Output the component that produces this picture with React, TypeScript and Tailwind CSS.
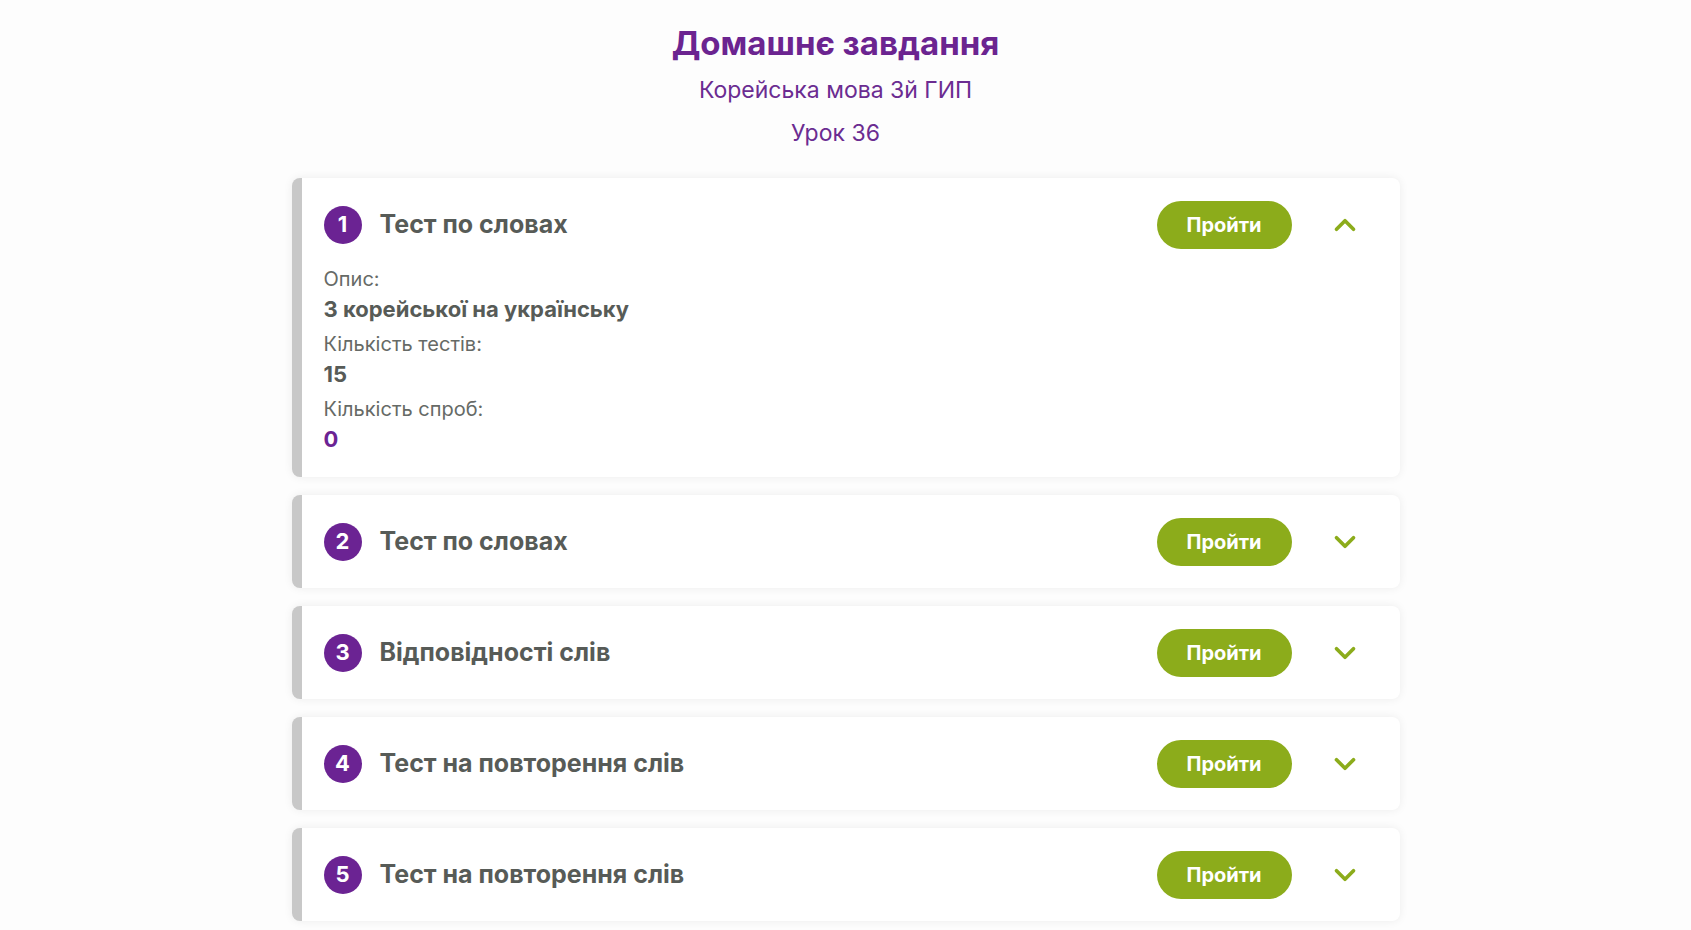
import { ChevronDown, ChevronUp } from 'lucide-react'

interface Task {
  id: number
  title: string
  description?: string
  tests?: number
  attempts?: number
  open?: boolean
}

const tasks: Task[] = [
  { id: 1, title: 'Тест по словах', description: 'З корейської на українську', tests: 15, attempts: 0, open: true },
  { id: 2, title: 'Тест по словах' },
  { id: 3, title: 'Відповідності слів' },
  { id: 4, title: 'Тест на повторення слів' },
  { id: 5, title: 'Тест на повторення слів' },
]

function TaskCard({ task }: { task: Task }) {
  return (
    <article className="rounded-lg border-l-[10px] border-[#c8c8c8] bg-white shadow-[0_0_10px_rgba(0,0,0,0.07)]">
      {/* Header */}
      <div className="flex h-[93px] items-center pl-[22px] pr-[38px]">
        <div className="flex h-[38px] w-[38px] shrink-0 items-center justify-center rounded-full bg-[#6b2393] text-[22px] font-bold text-white">
          {task.id}
        </div>
        <h3 className="ml-[18px] flex-1 text-[25px] font-bold text-[#575b57]">{task.title}</h3>
        <button className="h-[48px] w-[135px] rounded-full bg-[#8cac1b] text-[20px] font-bold text-white">
          Пройти
        </button>
        <div className="ml-[36px] flex w-[34px] justify-center text-[#8cac1b]">
          {task.open ? (
            <ChevronUp className="h-[34px] w-[34px]" strokeWidth={2.6} />
          ) : (
            <ChevronDown className="h-[34px] w-[34px]" strokeWidth={2.6} />
          )}
        </div>
      </div>

      {/* Details */}
      {task.open && (
        <div className="-mt-[7px] pb-[23px] pl-[22px] text-[20px] leading-[30px]">
          <p className="text-[#666a66]">Опис:</p>
          <p className="text-[22px] font-bold text-[#575b57]">{task.description}</p>
          <p className="mt-[5px] text-[#666a66]">Кількість тестів:</p>
          <p className="text-[22px] font-bold text-[#575b57]">{task.tests}</p>
          <p className="mt-[5px] text-[#666a66]">Кількість спроб:</p>
          <p className="text-[22px] font-bold text-[#6b2393]">{task.attempts}</p>
        </div>
      )}
    </article>
  )
}

export default function App() {
  return (
    <div className="min-h-screen bg-[#fdfdfd] pt-[20px] font-['Inter',sans-serif]">
      <header className="pr-[20px] text-center">
        <h1 className="text-[33px] font-bold leading-[46px] text-[#6b2490]">Домашнє завдання</h1>
        <p className="mt-[4px] text-[23px] leading-[40px] text-[#6b2c91]">Корейська мова 3й ГИП</p>
        <p className="text-[23px] leading-[46px] text-[#6b2c91]">Урок 36</p>
      </header>

      <main className="mx-auto mt-[22px] flex w-[1108px] flex-col gap-[18px]">
        {tasks.map((task) => (
          <TaskCard key={task.id} task={task} />
        ))}
      </main>
    </div>
  )
}
